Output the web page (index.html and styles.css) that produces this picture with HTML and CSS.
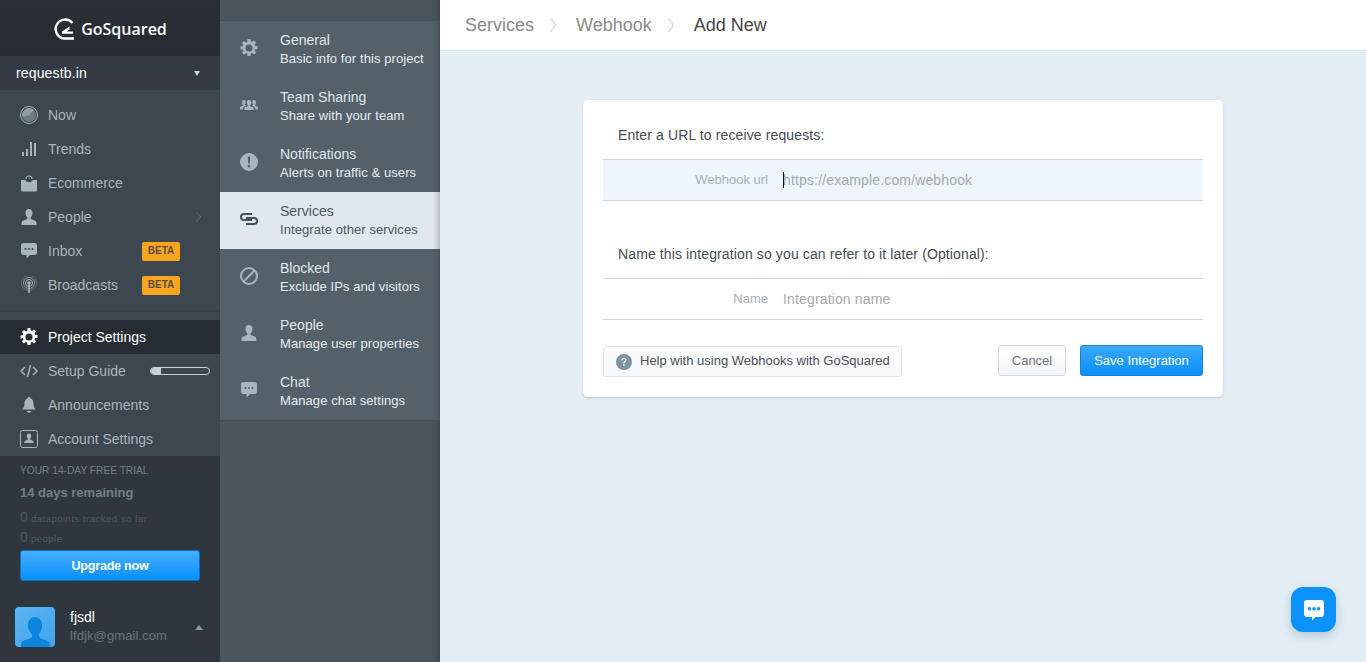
FILE: index.html
```html
<!DOCTYPE html>
<html lang="en">
<head>
    <meta charset="UTF-8">
    <meta name="viewport" content="width=device-width, initial-scale=1.0">
    <title>GoSquared - Add New Webhook</title>
    <link rel="stylesheet" href="styles.css">
</head>
<body>
    <svg class="icon-defs" width="0" height="0">
        <defs>
            <symbol id="i-gear" viewBox="0 0 18 18">
                <path fill-rule="evenodd" d="M7.6 0h2.8l.4 2.4 1.2.5 2-1.4 2 2-1.4 2 .5 1.2 2.4.4v2.8l-2.4.4-.5 1.2 1.4 2-2 2-2-1.4-1.2.5-.4 2.4H7.6l-.4-2.4-1.2-.5-2 1.4-2-2 1.4-2-.5-1.2L.5 10.4V7.6l2.4-.4.5-1.2-1.4-2 2-2 2 1.4 1.2-.5zM9 5.4a3.6 3.6 0 1 0 0 7.2 3.6 3.6 0 0 0 0-7.2z"/>
            </symbol>
            <symbol id="i-person" viewBox="-1 -1 18 18">
                <path d="M8 0c2.200 0 3.500 1.700 3.500 3.900 0 1.700-.8 3.300-1.700 4.300-.4.500-.3 1.500.3 1.900.9.600 3.400 1.200 4.500 2 .6.500.9 1.900.9 3.900H.5c0-2 .3-3.400.9-3.900 1.100-.8 3.600-1.400 4.500-2 .6-.4.700-1.400.3-1.900C5.300 7.200 4.500 5.600 4.500 3.900 4.500 1.700 5.800 0 8 0z"/>
            </symbol>
            <symbol id="i-chat" viewBox="-1 -1 18 18">
                <path fill-rule="evenodd" d="M2.500 0h11A2.500 2.500 0 0 1 16 2.500v7a2.500 2.500 0 0 1-2.500 2.500H9l-3.500 3.500V12h-3A2.500 2.500 0 0 1 0 9.500v-7A2.500 2.500 0 0 1 2.500 0zM4.500 5a1 1 0 1 0 0 2 1 1 0 0 0 0-2zm3.500 0a1 1 0 1 0 0 2 1 1 0 0 0 0-2zm3.500 0a1 1 0 1 0 0 2 1 1 0 0 0 0-2z"/>
            </symbol>
        </defs>
    </svg>

    <div class="app">
        <aside class="sidebar">
            <div class="logo">
                <svg class="logo-mark" viewBox="0 0 22 22" width="22" height="22">
                    <path d="M19.500 5A9.500 9.500 0 1 0 11 20.500h10" fill="none" stroke="#fff" stroke-width="2.400"/>
                    <path d="M9 13.500l7.500-5v3l-2.800 2h6.300v2.200H9z" fill="#fff"/>
                </svg>
                <span class="logo-text">GoSquared</span>
            </div>
            <div class="project-select">
                <span>requestb.in</span>
                <span class="caret-down"></span>
            </div>

            <nav class="nav nav-top">
                <a class="nav-item">
                    <svg class="nav-icon" viewBox="0 0 18 18"><circle cx="9" cy="9" r="8.500" fill="none" stroke="#a9b5bd"/><circle cx="9" cy="9" r="7" fill="#6f7b83"/><path d="M9 9l5-5a7 7 0 0 0-11.500 7z" fill="#a9b5bd" opacity=".6"/></svg>
                    <span>Now</span>
                </a>
                <a class="nav-item">
                    <svg class="nav-icon" viewBox="0 0 18 18"><path d="M2 12h2v4H2zm4-3h2v7H6zm4-7h2v14h-2zm4 1h2v13h-2z" fill="#a9b5bd"/></svg>
                    <span>Trends</span>
                </a>
                <a class="nav-item">
                    <svg class="nav-icon" viewBox="0 0 18 18"><path d="M6 5a3 3 0 0 1 6 0" fill="none" stroke="#a9b5bd" stroke-width="1.200"/><path d="M1 6h4.500c.5 3 6.500 3 7 0H17v10c0 1-.6 1.500-1.500 1.500h-13C1.600 17.500 1 17 1 16z" fill="#a9b5bd"/></svg>
                    <span>Ecommerce</span>
                </a>
                <a class="nav-item">
                    <svg class="nav-icon"><use href="#i-person"/></svg>
                    <span>People</span>
                    <svg class="chevron" viewBox="0 0 7 10" width="7" height="10"><path d="M1 .5L6 5 1 9.500" fill="none" stroke="#65727b"/></svg>
                </a>
                <a class="nav-item">
                    <svg class="nav-icon"><use href="#i-chat"/></svg>
                    <span>Inbox</span>
                    <span class="badge">BETA</span>
                </a>
                <a class="nav-item">
                    <svg class="nav-icon" viewBox="0 0 18 18"><g fill="none" stroke="#a9b5bd"><circle cx="9" cy="7" r="3.500"/><circle cx="9" cy="7" r="5.500" opacity=".7"/><circle cx="9" cy="7" r="7.500" opacity=".4"/></g><circle cx="9" cy="7" r="1.800" fill="#a9b5bd"/><path d="M8.200 7h1.600v10H8.200z" fill="#a9b5bd"/></svg>
                    <span>Broadcasts</span>
                    <span class="badge">BETA</span>
                </a>
            </nav>

            <nav class="nav nav-bottom">
                <a class="nav-item active">
                    <svg class="nav-icon"><use href="#i-gear"/></svg>
                    <span>Project Settings</span>
                </a>
                <a class="nav-item">
                    <svg class="nav-icon" viewBox="0 0 18 18"><path d="M5 5L1 9l4 4M13 5l4 4-4 4M10.500 3l-3 12" fill="none" stroke="#a9b5bd" stroke-width="1.500"/></svg>
                    <span>Setup Guide</span>
                    <span class="progress"><span class="progress-fill" style="width: 17%"></span></span>
                </a>
                <a class="nav-item">
                    <svg class="nav-icon" viewBox="0 0 18 18"><path d="M9 1c.8 0 1.300.5 1.300 1.200C12.500 3 13.500 5 13.500 7.500c0 3 .7 4.500 2.500 6H2c1.800-1.500 2.500-3 2.500-6 0-2.500 1-4.500 3.200-5.300C7.700 1.500 8.200 1 9 1zM6.800 15h4.400c0 1-1 1.800-2.200 1.800S6.800 16 6.800 15z" fill="#a9b5bd"/></svg>
                    <span>Announcements</span>
                </a>
                <a class="nav-item">
                    <svg class="nav-icon" viewBox="0 0 18 18"><rect x=".5" y=".5" width="17" height="17" rx="2" fill="none" stroke="#a9b5bd"/><path d="M9 3.500c1.400 0 2.200 1 2.200 2.400 0 1-.5 2-1 2.600-.3.400-.2 1 .2 1.200.6.400 2.200.7 2.800 1.300.3.300.5 1 .5 2H4.300c0-1 .2-1.700.5-2 .6-.6 2.200-.9 2.800-1.300.4-.2.500-.8.200-1.200-.5-.6-1-1.600-1-2.600C6.800 4.500 7.600 3.500 9 3.500z" fill="#a9b5bd"/></svg>
                    <span>Account Settings</span>
                </a>
            </nav>

            <div class="trial">
                <div class="trial-head">YOUR 14-DAY FREE TRIAL</div>
                <div class="trial-days">14 days remaining</div>
                <div class="trial-stat"><b>0</b> datapoints tracked so far</div>
                <div class="trial-stat"><b>0</b> people</div>
                <button class="upgrade">Upgrade now</button>
            </div>

            <div class="account">
                <div class="avatar">
                    <svg viewBox="0 0 40 40" width="40" height="40"><path transform="translate(2 3.600) scale(.9 .91)" d="M20 7c5 0 8 4 8 9.500 0 4-1.800 7.500-3.500 9.500-.8 1-.6 3 .8 3.800 2.500 1.400 7 2.200 9.700 4 1 .7 1.500 2.700 1.500 6.200H4.500c0-3.500.5-5.500 1.500-6.200 2.700-1.800 7.200-2.600 9.700-4 1.400-.8 1.600-2.800.8-3.800C14.800 24 12 20.500 12 16.500 12 11 15 7 20 7z" fill="#0c86dd"/></svg>
                </div>
                <div class="account-text">
                    <div class="account-name">fjsdl</div>
                    <div class="account-mail">lfdjk@gmail.com</div>
                </div>
                <span class="caret-up"></span>
            </div>
        </aside>

        <aside class="subnav">
            <div class="subnav-top"></div>
            <div class="subnav-list">
                <a class="sub-item">
                    <svg class="sub-icon"><use href="#i-gear"/></svg>
                    <div><div class="sub-title">General</div><div class="sub-desc">Basic info for this project</div></div>
                </a>
                <a class="sub-item">
                    <svg class="sub-icon" viewBox="0 0 18 18"><path d="M9 4c1.500 0 2.300 1.100 2.300 2.500 0 1-.5 2-1 2.600-.3.400-.2 1 .2 1.200.6.400 2 .7 2.700 1.200.4.300.5 1.200.5 2.500H4.300c0-1.300.1-2.200.5-2.500.7-.5 2.100-.8 2.700-1.200.4-.2.500-.8.200-1.200-.5-.6-1-1.600-1-2.600C6.700 5.100 7.500 4 9 4z"/><path d="M4 4c1 0 1.700.8 1.700 2 0 .9-.4 1.700-.8 2.200-.2.300-.1.700.1.900l1 .6c-1.800.8-3.200 1-3.200 3.800H0c0-1.500.1-2.400.4-2.700.5-.5 1.600-.7 2.200-1 .4-.2.400-.6.200-.9C2.400 8.200 2 7.300 2 6.200 2 4.800 2.800 4 4 4zm10 0c1.200 0 2 .8 2 2.200 0 1.100-.4 2-.8 2.700-.2.300-.2.700.2.900.6.300 1.700.5 2.200 1 .3.300.4 1.200.4 2.700h-2.800c0-2.800-1.400-3-3.200-3.800l1-.6c.2-.2.300-.6.100-.9-.4-.5-.8-1.300-.8-2.200 0-1.200.7-2 1.700-2z"/></svg>
                    <div><div class="sub-title">Team Sharing</div><div class="sub-desc">Share with your team</div></div>
                </a>
                <a class="sub-item">
                    <svg class="sub-icon" viewBox="0 0 18 18"><path fill-rule="evenodd" d="M9 0a9 9 0 1 1 0 18A9 9 0 0 1 9 0zM7.800 3.500l.3 7h1.800l.3-7zM9 11.800a1.400 1.400 0 1 0 0 2.800 1.400 1.400 0 0 0 0-2.800z"/></svg>
                    <div><div class="sub-title">Notifications</div><div class="sub-desc">Alerts on traffic &amp; users</div></div>
                </a>
                <a class="sub-item current">
                    <svg class="sub-icon" viewBox="0 0 20 18"><g fill="none" stroke="#46525b" stroke-width="2"><path d="M13 4H5a3 3 0 0 0 0 6h8"/><path d="M7 8h8a3 3 0 0 1 0 6H7"/></g></svg>
                    <div><div class="sub-title">Services</div><div class="sub-desc">Integrate other services</div></div>
                </a>
                <a class="sub-item">
                    <svg class="sub-icon" viewBox="0 0 18 18"><g fill="none" stroke="#a9b5bd" stroke-width="2"><circle cx="9" cy="9" r="8"/><path d="M3.500 14.500l11-11"/></g></svg>
                    <div><div class="sub-title">Blocked</div><div class="sub-desc">Exclude IPs and visitors</div></div>
                </a>
                <a class="sub-item">
                    <svg class="sub-icon"><use href="#i-person"/></svg>
                    <div><div class="sub-title">People</div><div class="sub-desc">Manage user properties</div></div>
                </a>
                <a class="sub-item">
                    <svg class="sub-icon"><use href="#i-chat"/></svg>
                    <div><div class="sub-title">Chat</div><div class="sub-desc">Manage chat settings</div></div>
                </a>
            </div>
        </aside>

        <main class="main">
            <header class="crumbs">
                <span class="crumb">Services</span>
                <svg class="crumb-sep" viewBox="0 0 7 14" width="7" height="14"><path d="M1 .5c3 2 4.500 4 5 6.500-.5 2.500-2 4.500-5 6.500" fill="none" stroke="#dcdcdc" stroke-width="1.500"/></svg>
                <span class="crumb">Webhook</span>
                <svg class="crumb-sep" viewBox="0 0 7 14" width="7" height="14"><path d="M1 .5c3 2 4.500 4 5 6.500-.5 2.500-2 4.500-5 6.500" fill="none" stroke="#dcdcdc" stroke-width="1.500"/></svg>
                <span class="crumb crumb-now">Add New</span>
            </header>

            <section class="card">
                <p class="card-text">Enter a URL to receive requests:</p>
                <div class="field field-focus">
                    <span class="field-label">Webhook url</span>
                    <span class="field-value"><span class="cursor"></span>https://example.com/webhook</span>
                </div>
                <p class="card-text card-text-second">Name this integration so you can refer to it later (Optional):</p>
                <div class="field">
                    <span class="field-label">Name</span>
                    <span class="field-value">Integration name</span>
                </div>
                <div class="card-actions">
                    <a class="btn btn-help">
                        <svg viewBox="0 0 16 16" width="16" height="16"><circle cx="8" cy="8" r="8" fill="#7f929f"/><path d="M5.500 6.200C5.600 4.700 6.600 4 8 4c1.500 0 2.500.8 2.500 2 0 1.800-2 1.700-2 3.400H7.200c0-2.300 1.900-2.300 1.900-3.400 0-.5-.4-.9-1.100-.9-.7 0-1.100.4-1.200 1.100zM7 10.300h1.600v1.600H7z" fill="#fff"/></svg>
                        <span class="btn-help-text">Help with using Webhooks with GoSquared</span>
                    </a>
                    <button class="btn btn-cancel">Cancel</button>
                    <button class="btn btn-save">Save Integration</button>
                </div>
            </section>
        </main>
    </div>

    <button class="chat-launcher">
        <svg viewBox="0 0 22 22" width="22" height="22"><path fill-rule="evenodd" d="M4 1h14a3 3 0 0 1 3 3v11a3 3 0 0 1-3 3h-5.500L9 21.500V18H4a3 3 0 0 1-3-3V4a3 3 0 0 1 3-3zm2.500 7a1.800 1.800 0 1 0 0 3.600 1.800 1.800 0 0 0 0-3.600zm4.500 0a1.800 1.800 0 1 0 0 3.600A1.800 1.800 0 0 0 11 8zm4.500 0a1.800 1.800 0 1 0 0 3.600 1.800 1.800 0 0 0 0-3.600z" fill="#fff"/></svg>
    </button>
</body>
</html>
```

FILE: styles.css
```css
* {
    box-sizing: border-box;
}
html, body {
    height: 100%;
}
body {
    margin: 0;
    font-family: "Liberation Sans", Arial, sans-serif;
    font-size: 14px;
    color: #3d464d;
    background-color: #e3edf4;
    overflow: hidden;
}
.icon-defs {
    position: absolute;
}
.app {
    display: flex;
    height: 662px;
}

/* left sidebar */
.sidebar {
    width: 220px;
    flex: none;
    display: flex;
    flex-direction: column;
    background-color: #3d4750;
    color: #a9b5bd;
}
.logo {
    height: 56px;
    padding-top: 1px;
    display: flex;
    align-items: center;
    justify-content: center;
    gap: 6px;
    background: linear-gradient(#2a3036, #252c32);
}
.logo-text {
    font-family: "Open Sans", sans-serif;
    font-weight: 600;
    font-size: 16px;
    color: #ffffff;
}
.project-select {
    height: 34px;
    padding: 0 20px 0 16px;
    display: flex;
    align-items: center;
    justify-content: space-between;
    background-color: #333c44;
    color: #ffffff;
    letter-spacing: .15px;
}
.caret-down {
    width: 0;
    height: 0;
    border-left: 3px solid transparent;
    border-right: 3px solid transparent;
    border-top: 5px solid #c6d0d7;
}
.nav-top {
    padding: 8px 0;
    border-bottom: 2px solid #384149;
}
.nav-bottom {
    padding-top: 8px;
}
.nav-item {
    height: 34px;
    padding: 0 10px 0 20px;
    display: flex;
    align-items: center;
    position: relative;
}
.nav-item.active {
    background-color: #262d33;
    color: #ffffff;
}
.nav-icon {
    width: 18px;
    height: 18px;
    margin-right: 10px;
    fill: #a9b5bd;
}
.active .nav-icon {
    fill: #ffffff;
}
.chevron {
    margin-left: auto;
    margin-right: 8px;
}
.badge {
    margin-left: auto;
    width: 38px;
    height: 19px;
    margin-right: 30px;
    border-radius: 2px;
    background-color: #f9a520;
    color: #59503f;
    font-size: 10px;
    font-weight: bold;
    line-height: 18px;
    text-align: center;
}
.progress {
    margin-left: auto;
    width: 60px;
    height: 8px;
    border: 1px solid #c6d0d7;
    border-radius: 4px;
    overflow: hidden;
}
.progress-fill {
    display: block;
    height: 100%;
    background-color: #c6d0d7;
}
.trial {
    flex: none;
    padding: 9px 20px 0;
    background-color: #2f373e;
}
.trial-head {
    font-size: 10.2px;
    line-height: 12px;
    color: #727f88;
}
.trial-days {
    margin-top: 8px;
    font-size: 13px;
    font-weight: bold;
    line-height: 16px;
    color: #727f88;
}
.trial-stat {
    margin-top: 4px;
    height: 16px;
    font-size: 9.500px;
    line-height: 16px;
    letter-spacing: .5px;
    color: #4d5963;
}
.trial-days + .trial-stat {
    margin-top: 8px;
}
.trial-stat b {
    font-size: 14px;
    font-weight: normal;
    letter-spacing: 0;
}
.upgrade {
    display: block;
    width: 180px;
    height: 31px;
    margin-top: 5px;
    border: 1px solid #0a6fc0;
    border-radius: 3px;
    background: linear-gradient(#45afff, #0a90fb);
    color: #ffffff;
    font-family: inherit;
    font-size: 12.500px;
    font-weight: bold;
    letter-spacing: -.2px;
    padding: 0;
}
.account {
    flex: 1;
    display: flex;
    align-items: center;
    padding: 26px 15px 15px;
    background-color: #2f373e;
}
.avatar {
    width: 40px;
    height: 40px;
    border-radius: 4px;
    overflow: hidden;
    background: linear-gradient(135deg, #5cb5f2, #3fa4ec);
}
.avatar svg {
    display: block;
}
.account-text {
    margin-left: 15px;
    flex: 1;
}
.account-name {
    margin-top: -1px;
    color: #ffffff;
    line-height: 18px;
}
.account-mail {
    margin-top: 1px;
    font-size: 13px;
    letter-spacing: .1px;
    line-height: 18px;
    color: #68747d;
}
.caret-up {
    width: 0;
    height: 0;
    margin-right: 2px;
    border-left: 4px solid transparent;
    border-right: 4px solid transparent;
    border-bottom: 5px solid #8a97a0;
}

/* second column */
.subnav {
    width: 220px;
    flex: none;
    display: flex;
    flex-direction: column;
    background-color: #4a555d;
    box-shadow: inset -8px 0 8px -8px rgba(0, 0, 0, .3);
}
.subnav-top {
    height: 21px;
    border-bottom: 1px solid #434e56;
}
.subnav-list {
    border-bottom: 1px solid #434e56;
    background-color: #55616a;
    box-shadow: inset -8px 0 8px -8px rgba(0, 0, 0, .3);
}
.sub-item {
    height: 57px;
    padding: 10px 0 0 20px;
    display: flex;
    align-items: flex-start;
    color: #e4ebf0;
}
.sub-icon {
    width: 18px;
    height: 18px;
    flex: none;
    margin-top: 8px;
    margin-right: 22px;
    fill: #a9b5bd;
}
.sub-title {
    line-height: 18px;
    color: #dfe6eb;
}
.sub-desc {
    margin-top: 1px;
    font-size: 13px;
    letter-spacing: .08px;
    line-height: 18px;
}
.sub-item.current {
    background: linear-gradient(to right, #e0e8ef 97%, #b9c1c8);
    color: #4b565e;
}
.current .sub-title {
    color: #4b565e;
}
.current .sub-icon {
    width: 20px;
    margin-left: -1px;
    margin-right: 21px;
}

/* main part */
.main {
    flex: 1;
    min-width: 0;
}
.crumbs {
    height: 51px;
    padding-left: 25px;
    display: flex;
    align-items: center;
    background-color: #ffffff;
    border-bottom: 1px solid #d8e2ea;
    font-size: 18px;
    color: #8a8a8a;
}
.crumb-sep {
    margin: 0 20px 0 15px;
}
.crumb-now {
    color: #444444;
}
.card {
    width: 640px;
    height: 297px;
    margin: 49px 0 0 143px;
    padding: 0 20px;
    background-color: #ffffff;
    border-radius: 5px;
    box-shadow: 0 1px 2px rgba(90, 115, 135, .3);
}
.card-text {
    margin: 0;
    height: 59px;
    padding: 27px 15px 0;
    line-height: 17px;
    letter-spacing: .12px;
    color: #444c52;
}
.card-text-second {
    height: 77px;
    padding-top: 45px;
}
.field {
    height: 42px;
    display: flex;
    align-items: center;
    border-top: 1px solid #cfd4d9;
    border-bottom: 1px solid #cfd4d9;
}
.field-focus {
    background-color: #edf5fd;
}
.field-label {
    width: 165px;
    margin-bottom: 2px;
    text-align: right;
    font-size: 13px;
    color: #a7afb6;
}
.field-value {
    margin-left: 15px;
    color: #a9a9a9;
    letter-spacing: .15px;
    position: relative;
}
.cursor {
    position: absolute;
    left: 0;
    top: 0;
    width: 1px;
    height: 16px;
    background-color: #111111;
}
.card-actions {
    margin-top: 25px;
    display: flex;
    align-items: flex-start;
}
.btn {
    height: 31px;
    border-radius: 3px;
    font-family: inherit;
    font-size: 13px;
    padding: 0;
}
.btn-help {
    width: 299px;
    margin-top: 1px;
    margin-right: auto;
    padding-left: 12px;
    display: flex;
    align-items: center;
    gap: 8px;
    border: 1px solid #e1e4e7;
    background-color: #f9fafb;
    color: #49525a;
}
.btn-help-text {
    margin-bottom: 2px;
}
.btn-cancel {
    width: 68px;
    border: 1px solid #cfd9e2;
    background: linear-gradient(#ffffff, #f3f6f8);
    color: #6a747c;
}
.btn-save {
    width: 123px;
    margin-left: 14px;
    border: 1px solid #1a80cc;
    background: linear-gradient(#3aa9fb, #0a8ffb);
    color: #ffffff;
}
.chat-launcher {
    position: fixed;
    left: 1291px;
    top: 587px;
    width: 45px;
    height: 45px;
    padding: 0;
    border: 0;
    border-radius: 12px;
    background-color: #0b93fb;
    box-shadow: 0 4px 10px rgba(60, 90, 120, .25);
    display: flex;
    align-items: center;
    justify-content: center;
}
```
